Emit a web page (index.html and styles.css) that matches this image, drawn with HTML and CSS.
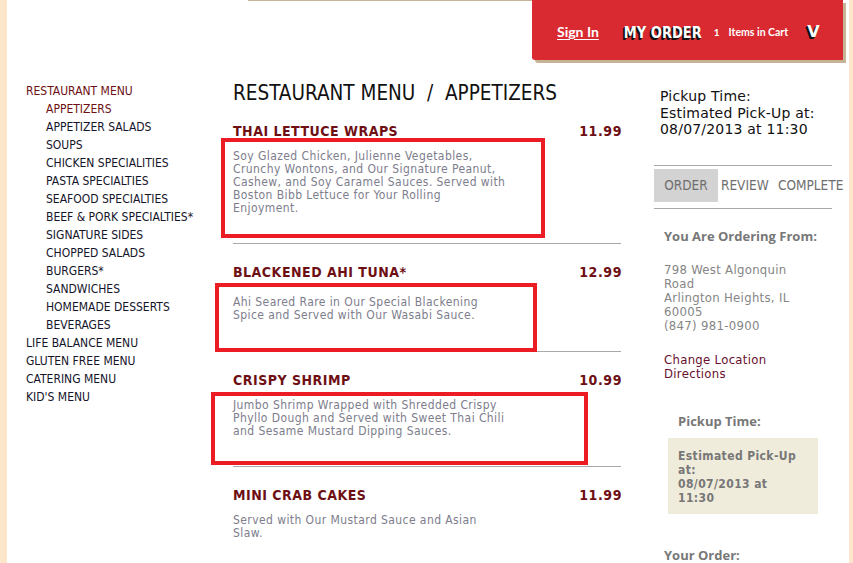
FILE: index.html
```html
<!DOCTYPE html>
<html lang="en">
<head>
<meta charset="utf-8">
<title>Restaurant Menu - Appetizers</title>
<link rel="stylesheet" href="styles.css">
</head>
<body>
<div class="page">
  <header class="topbar">
    <div class="topline"></div>
    <div class="order-bar">
      <a class="sign-in" href="#">Sign In</a>
      <span class="my-order">MY ORDER</span>
      <span class="cart-count">1</span>
      <span class="cart-label">Items in Cart</span>
      <span class="cart-toggle">V</span>
    </div>
  </header>

  <div class="columns">
    <nav class="side-nav">
      <a class="nav-top active" href="#">RESTAURANT MENU</a>
      <a class="nav-sub active" href="#">APPETIZERS</a>
      <a class="nav-sub" href="#">APPETIZER SALADS</a>
      <a class="nav-sub" href="#">SOUPS</a>
      <a class="nav-sub" href="#">CHICKEN SPECIALITIES</a>
      <a class="nav-sub" href="#">PASTA SPECIALTIES</a>
      <a class="nav-sub" href="#">SEAFOOD SPECIALTIES</a>
      <a class="nav-sub" href="#">BEEF &amp; PORK SPECIALTIES*</a>
      <a class="nav-sub" href="#">SIGNATURE SIDES</a>
      <a class="nav-sub" href="#">CHOPPED SALADS</a>
      <a class="nav-sub" href="#">BURGERS*</a>
      <a class="nav-sub" href="#">SANDWICHES</a>
      <a class="nav-sub" href="#">HOMEMADE DESSERTS</a>
      <a class="nav-sub" href="#">BEVERAGES</a>
      <a class="nav-top" href="#">LIFE BALANCE MENU</a>
      <a class="nav-top" href="#">GLUTEN FREE MENU</a>
      <a class="nav-top" href="#">CATERING MENU</a>
      <a class="nav-top" href="#">KID'S MENU</a>
    </nav>

    <main class="menu">
      <h1 class="menu-title">RESTAURANT MENU&nbsp; / &nbsp;APPETIZERS</h1>

      <section class="item">
        <div class="item-head"><span class="item-name">THAI LETTUCE WRAPS</span><span class="item-price">11.99</span></div>
        <p class="item-desc">Soy Glazed Chicken, Julienne Vegetables,<br>Crunchy Wontons, and Our Signature Peanut,<br>Cashew, and Soy Caramel Sauces. Served with<br>Boston Bibb Lettuce for Your Rolling<br>Enjoyment.</p>
      </section>

      <section class="item item-two">
        <div class="item-head"><span class="item-name">BLACKENED AHI TUNA*</span><span class="item-price">12.99</span></div>
        <p class="item-desc">Ahi Seared Rare in Our Special Blackening<br>Spice and Served with Our Wasabi Sauce.</p>
      </section>

      <section class="item">
        <div class="item-head"><span class="item-name">CRISPY SHRIMP</span><span class="item-price">10.99</span></div>
        <p class="item-desc">Jumbo Shrimp Wrapped with Shredded Crispy<br>Phyllo Dough and Served with Sweet Thai Chili<br>and Sesame Mustard Dipping Sauces.</p>
      </section>

      <section class="item item-last">
        <div class="item-head"><span class="item-name">MINI CRAB CAKES</span><span class="item-price">11.99</span></div>
        <p class="item-desc">Served with Our Mustard Sauce and Asian<br>Slaw.</p>
      </section>

      <div class="mark mark-1"></div>
      <div class="mark mark-2"></div>
      <div class="mark mark-3"></div>
    </main>

    <aside class="cart">
      <div class="pickup-top">Pickup Time:<br>Estimated Pick-Up at:<br>08/07/2013 at 11:30</div>
      <div class="steps">
        <span class="step step-current">ORDER</span>
        <span class="step step-review">REVIEW</span>
        <span class="step step-complete">COMPLETE</span>
      </div>
      <div class="label from-label">You Are Ordering From:</div>
      <div class="address">798 West Algonquin<br>Road<br>Arlington Heights, IL<br>60005<br>(847) 981-0900</div>
      <div class="links"><a href="#">Change Location</a><br><a href="#">Directions</a></div>
      <div class="label pickup-label">Pickup Time:</div>
      <div class="pickup-box">Estimated Pick-Up<br>at:<br>08/07/2013 at<br>11:30</div>
      <div class="label order-label">Your Order:</div>
    </aside>
  </div>
</div>
</body>
</html>
```

FILE: styles.css
```css
html, body {
  margin: 0;
  padding: 0;
}
body {
  background: #fde6c9;
  font-family: "DejaVu Sans Condensed", "DejaVu Sans", sans-serif;
  overflow: hidden;
}
a { text-decoration: none; color: inherit; }
p, h1 { margin: 0; }

.page {
  margin-left: 7px;
  width: 842px;
  height: 563px;
  background: #fff;
  overflow: hidden;
}

/* header */
.topbar {
  display: flex;
  height: 70px;
}
.topline {
  margin-left: 241px;
  width: 284px;
  height: 0;
  border-top: 1px solid #c6b497;
}
.order-bar {
  position: relative;
  width: 311px;
  height: 60px;
  background: #d92a31;
  border-bottom-left-radius: 3px;
  box-shadow: 3px 3px 0 #c6b497;
  display: flex;
  align-items: center;
  padding-top: 3px;
  box-sizing: border-box;
  color: #fff;
}
.sign-in {
  margin-left: 25px;
  font-family: "Lato", sans-serif;
  font-weight: 700;
  font-size: 14px;
  text-decoration: underline;
  text-underline-offset: 2px;
}
.my-order {
  margin-left: 25px;
  font-family: "DejaVu Sans Condensed", sans-serif;
  font-weight: 700;
  font-size: 14.5px;
  text-shadow: -1px 1px 0 #111, -2px 2px 0 #111;
  transform: scaleY(1.12);
}
.cart-count {
  margin-left: 12px;
  font-family: "Lato", sans-serif;
  font-weight: 700;
  font-size: 10px;
}
.cart-label {
  margin-left: 9px;
  font-family: "Lato", sans-serif;
  font-weight: 700;
  font-size: 10.5px;
}
.cart-toggle {
  margin-left: 19px;
  font-family: "DejaVu Sans", sans-serif;
  font-weight: 700;
  font-size: 16px;
  text-shadow: -1px 1px 0 #111, -2px 2px 0 #111;
}

/* columns */
.columns {
  display: flex;
  align-items: flex-start;
}

.side-nav {
  width: 207px;
  padding-left: 19px;
  padding-top: 12px;
  display: flex;
  flex-direction: column;
  font-size: 12px;
  line-height: 18px;
  color: #14142a;
}
.nav-sub { padding-left: 20px; }
.side-nav .active { color: #6e0f14; }

.menu {
  position: relative;
  width: 388px;
  padding-top: 11px;
}
.menu-title {
  font-size: 20.5px;
  font-weight: 400;
  line-height: 24px;
  color: #111;
  margin-bottom: 18px;
  white-space: nowrap;
}
.item {
  padding-bottom: 28px;
  border-bottom: 1px solid #a9a9a9;
}
.item + .item { padding-top: 20px; }
.item-two { padding-bottom: 29px; }
.item-two .item-desc { margin-top: 15px; }
.item-last { border-bottom: none; padding-top: 21px; }
.item-head {
  display: flex;
  justify-content: space-between;
  font-size: 14px;
  font-weight: 700;
  line-height: 17px;
  color: #6e0f14;
  letter-spacing: 0.5px;
}
.item-price { letter-spacing: 0.6px; margin-right: -1px; }
.item-desc {
  margin-top: 10px;
  font-size: 12px;
  letter-spacing: 0.42px;
  line-height: 13px;
  color: #7d7d8c;
}

/* annotation boxes drawn over the menu */
.mark {
  position: absolute;
  border: 4px solid #ec1c24;
  box-sizing: border-box;
}
.mark-1 { left: -12px; top: 68px; width: 324px; height: 100px; }
.mark-2 { left: -18px; top: 213px; width: 322px; height: 69px; }
.mark-3 { left: -22px; top: 322px; width: 377px; height: 73px; }

/* right column */
.cart {
  margin-left: 33px;
  width: 195px;
  padding-top: 18px;
  font-size: 14px;
  color: #7a7a7a;
}
.pickup-top {
  padding-left: 6px;
  font-family: "DejaVu Sans", sans-serif;
  font-size: 14px;
  letter-spacing: 0.2px;
  line-height: 16.5px;
  color: #111;
  margin-bottom: 27px;
  white-space: nowrap;
}
.steps {
  width: 178px;
  border-top: 1px solid #a9a9a9;
  border-bottom: 1px solid #a9a9a9;
  padding: 3px 0 6px;
  display: flex;
  font-size: 13.5px;
  line-height: 33px;
  color: #6e6e6e;
  white-space: nowrap;
}
.step-current {
  width: 64px;
  flex: none;
  text-align: center;
  background: #d3d3d3;
}
.step-review { margin-left: 3px; width: 57px; flex: none; }
.step-complete { flex: none; }

.label {
  font-family: "Open Sans", sans-serif;
  font-weight: 700;
  font-size: 13px;
  line-height: 16px;
  color: #777;
  white-space: nowrap;
}
.from-label { margin-top: 19px; padding-left: 10px; }
.address {
  margin-top: 19px;
  padding-left: 10px;
  font-size: 13px;
  letter-spacing: 0.3px;
  line-height: 14px;
  color: #858585;
}
.links {
  margin-top: 20px;
  padding-left: 10px;
  font-size: 13px;
  letter-spacing: 0.3px;
  line-height: 14px;
  color: #6a0f2e;
}
.pickup-label { margin-top: 32px; padding-left: 24px; }
.pickup-box {
  margin-top: 9px;
  margin-left: 14px;
  width: 150px;
  box-sizing: border-box;
  padding: 11px 10px 9px;
  background: #f0ecdb;
  font-family: "DejaVu Sans Condensed", sans-serif;
  font-weight: 700;
  font-size: 12px;
  letter-spacing: 0.4px;
  line-height: 14px;
  color: #777;
}
.order-label { margin-top: 33px; padding-left: 10px; }
```
